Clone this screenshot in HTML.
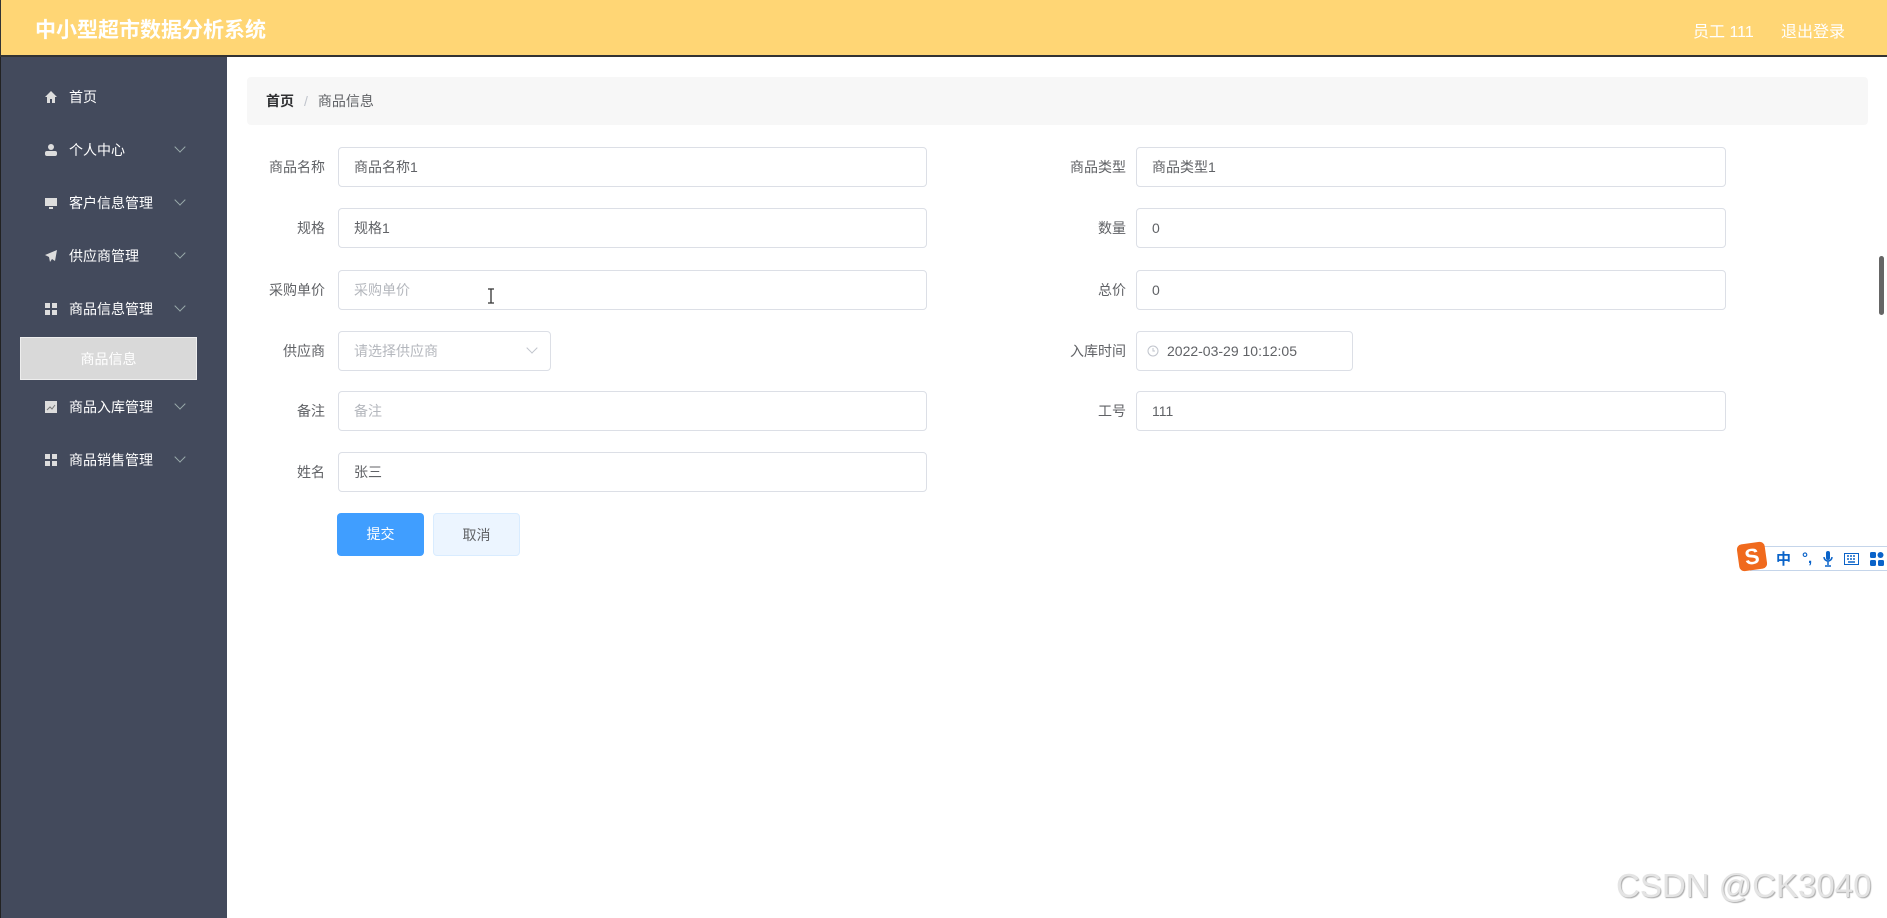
<!DOCTYPE html>
<html><head><meta charset="utf-8"><style>
*{margin:0;padding:0;box-sizing:border-box}
body{width:1887px;height:918px;overflow:hidden;background:#fff;font-family:"Liberation Sans","Noto Sans CJK SC",sans-serif;position:relative}
.hd{position:absolute;left:0;top:0;width:1887px;height:57px;background:#ffd675;border-bottom:2px solid #333;border-left:1px solid #333}
.hd .t{position:absolute;left:34px;top:14px;color:#fff;font-size:21px;font-weight:bold}
.hd .r{position:absolute;top:18px;color:#fff;font-size:16px}
.sb{position:absolute;left:0;top:57px;width:227px;height:861px;background:#434a5c;border-left:1px solid #222}
.mi{position:absolute;left:0;width:227px;height:30px;color:#fff;font-size:14px;line-height:30px}
.mi .ic{position:absolute;left:45px;top:9px;width:12px;height:12px}
.mi .tx{position:absolute;left:69px}
.mi .ch{position:absolute;left:176px;top:8px;width:8px;height:8px;border-right:1px solid #9aa;border-bottom:1px solid #9aa;transform:rotate(45deg)}
.sub{position:absolute;left:20px;top:337px;width:177px;height:43px;background:#d9d9d9;color:#fff;font-size:14px;text-align:center;line-height:43px;border:1px solid #eee}
.bc{position:absolute;left:247px;top:77px;width:1621px;height:48px;background:#f7f7f7;border-radius:4px;font-size:14px;line-height:48px;padding-left:19px;color:#606266}
.bc b{color:#303133}
.lb{position:absolute;font-size:14px;color:#606266;text-align:right;width:100px;line-height:40px;height:40px}
.in{position:absolute;height:40px;border:1px solid #dcdfe6;border-radius:4px;font-size:14px;color:#606266;line-height:38px;padding-left:15px;background:#fff}
.ph{color:#b4b7bd}
.btn{position:absolute;top:513px;width:87px;height:43px;border-radius:4px;font-size:14px;text-align:center;line-height:43px}
.ime{position:absolute;left:1750px;top:546px;width:137px;height:25px;border:1px solid #c5d5ea;border-right:none;background:#fff;color:#0a63c9;font-size:15px;font-weight:bold;display:flex;align-items:center;white-space:nowrap;padding-left:25px;gap:11px}
</style></head><body>
<div class="hd"><div class="t">中小型超市数据分析系统</div><div class="r" style="left:1692px">员工 111</div><div class="r" style="left:1780px">退出登录</div></div>
<div class="sb"></div>
<div class="mi" style="top:82px"><svg class="ic" viewBox="0 0 12 12"><path d="M6 0L0 6h2v6h3V8h2v4h3V6h2z" fill="#ddd"/></svg><span class="tx">首页</span></div>
<div class="mi" style="top:135px"><svg class="ic" viewBox="0 0 12 12"><circle cx="6" cy="3" r="3" fill="#ddd"/><rect x="0" y="7" width="12" height="5" rx="2" fill="#ddd"/></svg><span class="tx">个人中心</span><i class="ch"></i></div>
<div class="mi" style="top:188px"><svg class="ic" viewBox="0 0 12 12"><rect x="0" y="1" width="12" height="8" fill="#ddd"/><rect x="4" y="10" width="4" height="2" fill="#ddd"/></svg><span class="tx">客户信息管理</span><i class="ch"></i></div>
<div class="mi" style="top:241px"><svg class="ic" viewBox="0 0 12 12"><path d="M12 0L0 5l4 2 1 5 2-3 3 2z" fill="#ddd"/></svg><span class="tx">供应商管理</span><i class="ch"></i></div>
<div class="mi" style="top:294px"><svg class="ic" viewBox="0 0 12 12"><rect width="5" height="5" fill="#ddd"/><rect x="7" width="5" height="5" fill="#ddd"/><rect y="7" width="5" height="5" fill="#ddd"/><rect x="7" y="7" width="5" height="5" fill="#ddd"/></svg><span class="tx">商品信息管理</span><i class="ch"></i></div>
<div class="sub">商品信息</div>
<div class="mi" style="top:392px"><svg class="ic" viewBox="0 0 12 12"><rect width="12" height="12" fill="#ddd"/><path d="M2 9l3-3 2 2 3-4" stroke="#777" fill="none"/></svg><span class="tx">商品入库管理</span><i class="ch"></i></div>
<div class="mi" style="top:445px"><svg class="ic" viewBox="0 0 12 12"><rect width="5" height="5" fill="#ddd"/><rect x="7" width="5" height="5" fill="#ddd"/><rect y="7" width="5" height="5" fill="#ddd"/><rect x="7" y="7" width="5" height="5" fill="#ddd"/></svg><span class="tx">商品销售管理</span><i class="ch"></i></div>
<div class="bc"><b>首页</b><span style="color:#c0c4cc;margin:0 10px">/</span>商品信息</div>

<div class="lb" style="left:225px;top:147px">商品名称</div><div class="in" style="left:338px;top:147px;width:589px">商品名称1</div>
<div class="lb" style="left:225px;top:208px">规格</div><div class="in" style="left:338px;top:208px;width:589px">规格1</div>
<div class="lb" style="left:225px;top:270px">采购单价</div><div class="in" style="left:338px;top:270px;width:589px"><span class="ph">采购单价</span><svg style="position:absolute;left:148px;top:17px" width="8" height="16" viewBox="0 0 8 16"><path d="M1 1h6M1 15h6M4 1v14" stroke="#333" stroke-width="1.3" fill="none"/></svg></div>
<div class="lb" style="left:225px;top:331px">供应商</div><div class="in" style="left:338px;top:331px;width:213px"><span class="ph">请选择供应商</span><i style="position:absolute;right:14px;top:12px;width:8px;height:8px;border-right:1px solid #c0c4cc;border-bottom:1px solid #c0c4cc;transform:rotate(45deg)"></i></div>
<div class="lb" style="left:225px;top:391px">备注</div><div class="in" style="left:338px;top:391px;width:589px"><span class="ph">备注</span></div>
<div class="lb" style="left:225px;top:452px">姓名</div><div class="in" style="left:338px;top:452px;width:589px">张三</div>
<div class="btn" style="left:337px;background:#409eff;color:#fff">提交</div>
<div class="btn" style="left:433px;background:#ecf5ff;border:1px solid #d9ecff;color:#606266">取消</div>

<div class="lb" style="left:1026px;top:147px">商品类型</div><div class="in" style="left:1136px;top:147px;width:590px">商品类型1</div>
<div class="lb" style="left:1026px;top:208px">数量</div><div class="in" style="left:1136px;top:208px;width:590px">0</div>
<div class="lb" style="left:1026px;top:270px">总价</div><div class="in" style="left:1136px;top:270px;width:590px">0</div>
<div class="lb" style="left:1026px;top:331px">入库时间</div><div class="in" style="left:1136px;top:331px;width:217px;padding-left:30px"><svg style="position:absolute;left:10px;top:13px" width="12" height="12" viewBox="0 0 12 12"><circle cx="6" cy="6" r="5" stroke="#c0c4cc" fill="none"/><path d="M6 3v3h2" stroke="#c0c4cc" fill="none"/></svg>2022-03-29 10:12:05</div>
<div class="lb" style="left:1026px;top:391px">工号</div><div class="in" style="left:1136px;top:391px;width:590px">111</div>

<div style="position:absolute;left:1879px;top:256px;width:5px;height:59px;background:#666;border-radius:3px"></div>
<div class="ime"><span>中</span><span>°,</span><svg width="10" height="16" viewBox="0 0 10 16"><rect x="3" y="0" width="4" height="9" rx="2" fill="#0a63c9"/><path d="M1 6a4 4 0 0 0 8 0M5 10v4M2 15h6" stroke="#0a63c9" stroke-width="1.5" fill="none"/></svg><svg width="15" height="12" viewBox="0 0 15 12"><rect x="0.5" y="0.5" width="14" height="11" stroke="#0a63c9" fill="none"/><path d="M3 3h2M6 3h2M9 3h2M3 6h2M6 6h2M9 6h2M4 9h7" stroke="#0a63c9" stroke-width="1.4"/></svg><svg width="14" height="14" viewBox="0 0 14 14"><rect width="6" height="6" rx="1.5" fill="#0a63c9"/><circle cx="10.5" cy="3" r="3" fill="#0a63c9"/><rect y="8" width="6" height="6" rx="1.5" fill="#0a63c9"/><rect x="8" y="8" width="6" height="6" rx="1.5" fill="#0a63c9"/></svg></div>
<div style="position:absolute;left:1738px;top:543px;width:28px;height:27px;background:#f06a1d;border-radius:5px;transform:rotate(-8deg);color:#fff;font-weight:bold;font-size:22px;text-align:center;line-height:27px">S</div>
<div style="position:absolute;left:1616px;top:867px;font-size:33px;color:#e4e4e4;text-shadow:1px 1px 1px #aaa;white-space:nowrap">CSDN @CK3040</div>
</body></html>
